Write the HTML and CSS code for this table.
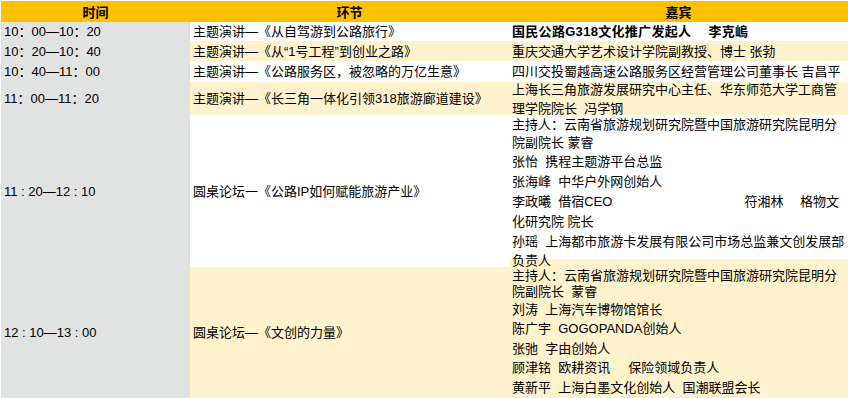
FILE: index.html
```html
<!DOCTYPE html>
<html lang="zh-CN">
<head>
<meta charset="utf-8">
<title>议程</title>
<link rel="stylesheet" href="styles.css">
</head>
<body>
<div class="sheet">
  <div class="head">
    <div class="w1">时间</div>
    <div class="w2">环节</div>
    <div class="w3">嘉宾</div>
  </div>
  <div class="rows">
    <div class="col w1 time">
      <div class="cell h1">10：00—10：20</div>
      <div class="cell h2">10：20—10：40</div>
      <div class="cell h3">10：40—11：00</div>
      <div class="cell h4">11：00—11：20</div>
      <div class="cell h5">11 : 20—12 : 10</div>
      <div class="cell h6">12 : 10—13 : 00</div>
    </div>
    <div class="col w2 session">
      <div class="cell h1">主题演讲—《从自驾游到公路旅行》</div>
      <div class="cell h2 beige">主题演讲—《从“1号工程”到创业之路》</div>
      <div class="cell h3">主题演讲—《公路服务区，被忽略的万亿生意》</div>
      <div class="cell h4 beige">主题演讲—《长三角一体化引领318旅游廊道建设》</div>
      <div class="cell h5">圆桌论坛一《公路IP如何赋能旅游产业》</div>
      <div class="cell h6 beige">圆桌论坛—《文创的力量》</div>
    </div>
    <div class="col w3 guests">
      <div class="cell h1 strong">国民公路G318文化推广发起人　 李克嶋</div>
      <div class="cell h2 beige">重庆交通大学艺术设计学院副教授、博士 张勃</div>
      <div class="cell h3">四川交投蜀越高速公路服务区经营管理公司董事长 吉昌平</div>
      <div class="cell h4 beige">
        <div>上海长三角旅游发展研究中心主任、华东师范大学工商管</div>
        <div>理学院院长  冯学钢</div>
      </div>
      <div class="cell g5 top">
        <div class="l18">主持人：云南省旅游规划研究院暨中国旅游研究院昆明分</div>
        <div class="l18">院副院长 蒙睿</div>
        <div class="l20">张怡  携程主题游平台总监</div>
        <div class="l20">张海峰  中华户外网创始人</div>
        <div class="l20">李政曦  借宿CEO<span class="gap"></span>符湘林　 格物文</div>
        <div class="l20">化研究院 院长</div>
        <div class="l20">孙瑶  上海都市旅游卡发展有限公司市场总监兼文创发展部</div>
        <div class="l18">负责人</div>
      </div>
      <div class="cell g6 top beige">
        <div class="l14">主持人：云南省旅游规划研究院暨中国旅游研究院昆明分</div>
        <div class="l18">院副院长  蒙睿</div>
        <div class="l18">刘涛  上海汽车博物馆馆长</div>
        <div class="l195">陈广宇  GOGOPANDA创始人</div>
        <div class="l195">张弛  字由创始人</div>
        <div class="l195">顾津铭  欧耕资讯     保险领域负责人</div>
        <div class="l195">黄新平  上海白墨文化创始人  国潮联盟会长</div>
      </div>
    </div>
  </div>
</div>
</body>
</html>
```

FILE: styles.css
```css
html, body {
  margin: 0;
  background: #ffffff;
}
body {
  padding: 1px 0 0 1px;
  height: 397px;
  overflow: hidden;
  font-family: "Liberation Sans", "Noto Sans CJK SC", sans-serif;
  font-size: 13px;
  color: #000000;
}
.sheet {
  width: 847px;
}
.head {
  display: flex;
  height: 21px;
  background: #ffc000;
  font-family: "Noto Sans CJK SC", sans-serif;
  font-weight: bold;
  font-size: 13px;
}
.head > div {
  display: flex;
  align-items: center;
  justify-content: center;
}
.w1 { width: 189px; flex: none; }
.w2 { width: 319px; flex: none; }
.w3 { width: 339px; flex: none; }

.rows {
  display: flex;
}
.col {
  display: flex;
  flex-direction: column;
}
.time {
  background: #e1e3e2;
}
.cell {
  display: flex;
  flex-direction: column;
  justify-content: center;
  padding: 0 3px;
  line-height: 19px;
  white-space: pre;
  box-sizing: border-box;
}
.cell.top {
  justify-content: flex-start;
}
.beige {
  background: #fff2cc;
}
.h1 { height: 19px; }
.h2 { height: 20px; }
.h3 { height: 21px; }
.h4 { height: 33px; }
.h5 { height: 152px; }
.h6 { height: 131px; }
.g5 {
  height: 144px;
  padding-top: 1px;
  position: relative;
  z-index: 1;
}
.g6 { height: 139px; padding-top: 10px; }

.l14 { line-height: 14px; }
.l18 { line-height: 18px; }
.l20 { line-height: 20px; }
.l195 { line-height: 19.5px; }

.strong {
  font-weight: bold;
  letter-spacing: 0.3px;
}
.gap {
  display: inline-block;
  width: 132px;
}
```
